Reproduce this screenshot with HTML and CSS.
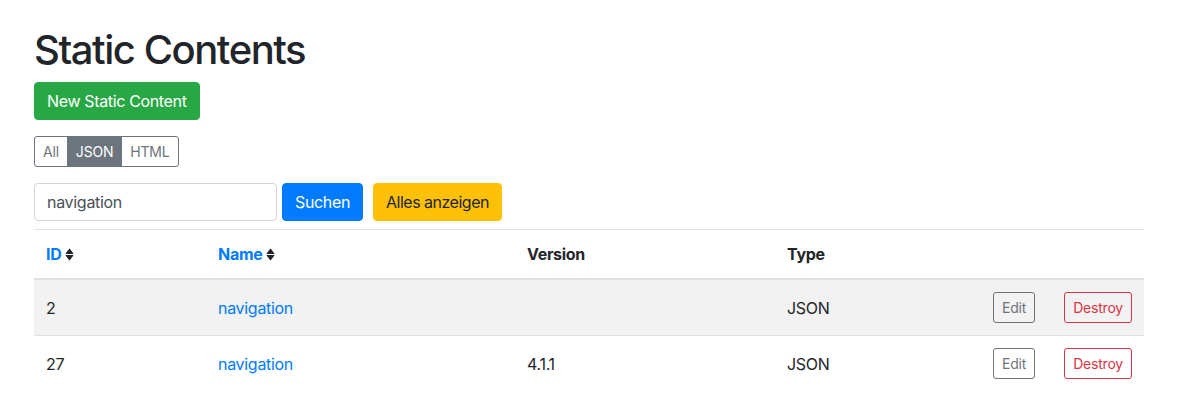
FILE: index.html
```html
<!DOCTYPE html>
<html lang="de">
<head>
<meta charset="utf-8">
<title>Static Contents</title>
<link rel="stylesheet" href="styles.css">
</head>
<body>
<div class="container">
  <h1 class="title">Static Contents</h1>
  <div class="row-new"><a class="btn btn-success" href="#">New Static Content</a></div>
  <div class="btn-group">
    <a class="btn-sm seg" href="#">All</a><a class="btn-sm seg active" href="#">JSON</a><a class="btn-sm seg" href="#">HTML</a>
  </div>
  <form class="search">
    <input class="form-control" type="text" value="navigation">
    <button class="btn btn-primary" type="button">Suchen</button>
    <a class="btn btn-warning" href="#">Alles anzeigen</a>
  </form>
  <table class="table">
    <thead>
      <tr>
        <th class="c-id"><a href="#">ID</a><svg class="sort" viewBox="0 0 9 13" width="9" height="13"><path d="M0.6 5.5 L4 0.9 Q4.5 0.3 5 0.9 L8.4 5.5 Q8.7 6.1 8 6.1 L1 6.1 Q0.3 6.1 0.6 5.5 Z M0.6 7.5 L4 12.1 Q4.5 12.7 5 12.1 L8.4 7.5 Q8.7 6.9 8 6.9 L1 6.9 Q0.3 6.9 0.6 7.5 Z"/></svg></th>
        <th class="c-name"><a href="#">Name</a><svg class="sort" viewBox="0 0 9 13" width="9" height="13"><path d="M0.6 5.5 L4 0.9 Q4.5 0.3 5 0.9 L8.4 5.5 Q8.7 6.1 8 6.1 L1 6.1 Q0.3 6.1 0.6 5.5 Z M0.6 7.5 L4 12.1 Q4.5 12.7 5 12.1 L8.4 7.5 Q8.7 6.9 8 6.9 L1 6.9 Q0.3 6.9 0.6 7.5 Z"/></svg></th>
        <th class="c-ver">Version</th>
        <th class="c-type">Type</th>
        <th class="c-edit"></th>
        <th class="c-del"></th>
      </tr>
    </thead>
    <tbody>
      <tr class="odd">
        <td>2</td>
        <td><a href="#">navigation</a></td>
        <td></td>
        <td>JSON</td>
        <td class="act"><a class="btn-sm out-secondary" href="#">Edit</a></td>
        <td class="act"><a class="btn-sm out-danger" href="#">Destroy</a></td>
      </tr>
      <tr>
        <td>27</td>
        <td><a href="#">navigation</a></td>
        <td>4.1.1</td>
        <td>JSON</td>
        <td class="act"><a class="btn-sm out-secondary" href="#">Edit</a></td>
        <td class="act"><a class="btn-sm out-danger" href="#">Destroy</a></td>
      </tr>
    </tbody>
  </table>
</div>
</body>
</html>
```
FILE: styles.css
```css
* { box-sizing: border-box; }
html, body { margin: 0; padding: 0; background: #fff; }
body {
  font-family: Inter, "Liberation Sans", sans-serif;
  font-size: 16px;
  line-height: 1.5;
  color: #212529;
  letter-spacing: -0.3px;
}
a { text-decoration: none; color: #007bff; }
.container { padding: 26px 39px 0 34px; }
.title {
  font-size: 40px;
  font-weight: 500;
  line-height: 48px;
  margin: 0 0 8px 0;
  letter-spacing: -1.45px;
}
.row-new { margin-bottom: 16px; display: flex; }
.btn {
  display: inline-block;
  font-family: inherit;
  font-size: 16px;
  line-height: 24px;
  letter-spacing: -0.35px;
  padding: 6px 12px;
  border: 1px solid transparent;
  border-radius: 4px;
  cursor: pointer;
}
.btn-success { background: #28a745; border-color: #28a745; color: #fff; }
.btn-primary { background: #007bff; border-color: #007bff; color: #fff; }
.btn-warning { background: #ffc107; border-color: #ffc107; color: #212529; letter-spacing: -0.5px; }
.btn-sm {
  display: inline-block;
  font-size: 14px;
  line-height: 21px;
  letter-spacing: -0.2px;
  padding: 4px 8px;
  border: 1px solid #6c757d;
  border-radius: 3px;
}
.btn-group { display: inline-flex; margin-bottom: 16px; }
.btn-group .seg { color: #6c757d; border-radius: 0; }
.btn-group .seg + .seg { margin-left: -1px; }
.btn-group .seg:first-child { border-radius: 3px 0 0 3px; }
.btn-group .seg:last-child { border-radius: 0 3px 3px 0; }
.btn-group .seg.active { background: #6c757d; color: #fff; }
.search { display: flex; align-items: center; margin: 0 0 8px 0; }
.form-control {
  width: 243px;
  height: 38px;
  padding: 6px 12px;
  font-family: inherit;
  font-size: 16px;
  letter-spacing: -0.3px;
  color: #495057;
  border: 1px solid #ced4da;
  border-radius: 4px;
  margin-right: 5px;
}
.search .btn-primary { margin-right: 10px; }
.table { width: 100%; border-collapse: collapse; table-layout: fixed; }
.table th, .table td {
  padding: 12px;
  text-align: left;
  vertical-align: middle;
  border-top: 1px solid #dee2e6;
}
.table thead th { border-bottom: 2px solid #dee2e6; font-weight: 700; }
.table thead th a { font-weight: 700; }
.sort { fill: #212529; margin-left: 4px; vertical-align: -1px; }
.c-id { width: 172px; }
.c-name { width: 309px; }
.c-ver { width: 260px; }
.c-type { width: 206px; }
.c-edit { width: 70px; }
.c-del { width: 93px; }
tr.odd td { background: #f2f2f2; }
.table td.act:last-child { text-align: right; }
.out-secondary { color: #6c757d; border-color: #6c757d; }
.out-danger { color: #dc3545; border-color: #dc3545; }
```
